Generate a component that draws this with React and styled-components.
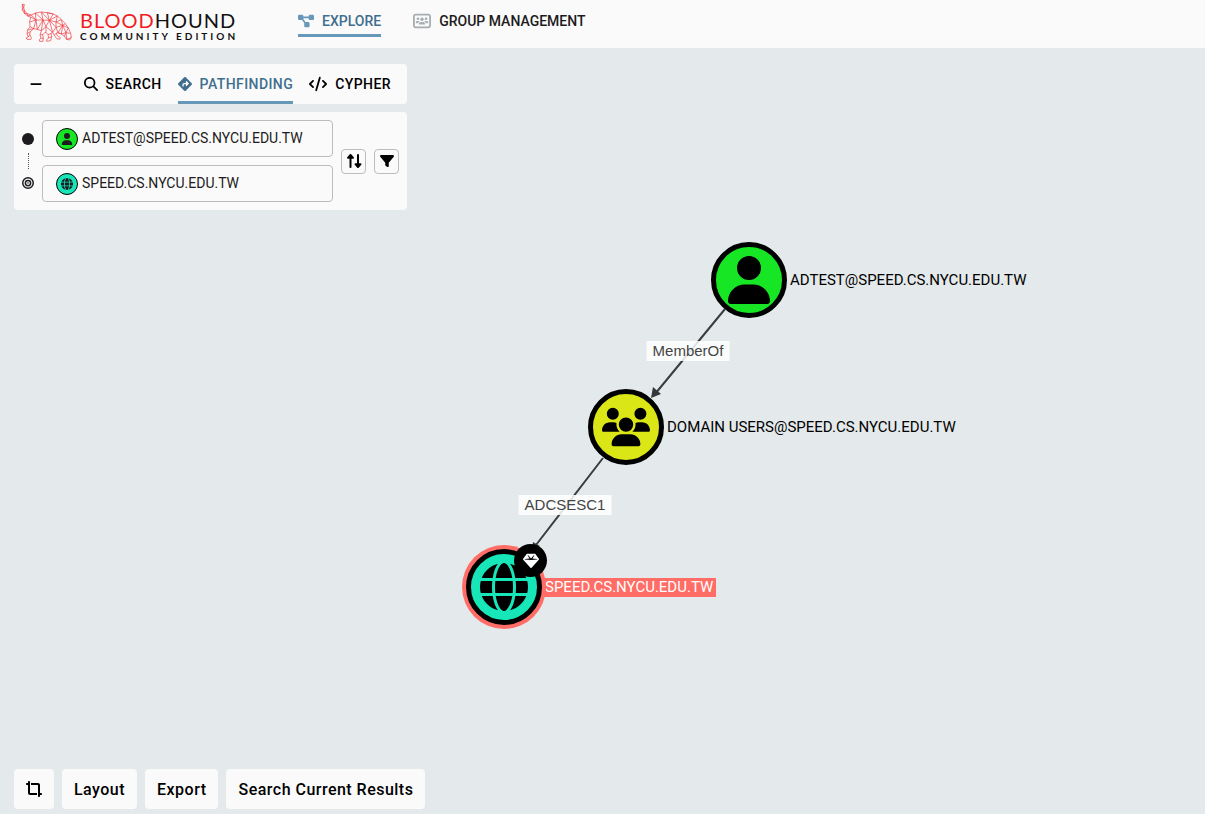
import React, { useState } from "react";
import styled, { createGlobalStyle, css } from "styled-components";
import {
  FaDiagramProject,
  FaUsersRectangle,
  FaMinus,
  FaMagnifyingGlass,
  FaDiamondTurnRight,
  FaCode,
  FaUser,
  FaUsers,
  FaGlobe,
  FaGem,
  FaFilter,
  FaCircle,
  FaBullseye,
  FaCropSimple,
} from "react-icons/fa6";

const GlobalStyle = createGlobalStyle`
  *, *::before, *::after { box-sizing: border-box; }
  body {
    margin: 0;
    background: #e4e9eb;
    color: #000;
    font-family: Roboto, "Liberation Sans", sans-serif;
  }
  button, input { font: inherit; color: inherit; }
  button { cursor: pointer; }
  svg { display: block; flex: none; }
`;

const Page = styled.div`
  display: flex;
  flex-direction: column;
  min-height: 100vh;
`;

const Header = styled.header`
  display: flex;
  align-items: flex-start;
  height: 48px;
  padding-left: 20px;
  background: #fafafa;
`;

const Brand = styled.a`
  display: flex;
  align-items: flex-start;
  width: 278px;
  color: #111;
  text-decoration: none;
  font-family: Lato, sans-serif;
`;

const BrandText = styled.span`
  display: flex;
  flex-direction: column;
  padding: 8px 0 0 8px;
`;

const BrandName = styled.span`
  font-size: 20px;
  line-height: 24px;
  letter-spacing: 1px;
`;

const BrandRed = styled.span`
  color: #f01c24;
`;

const BrandEdition = styled.span`
  font-size: 10px;
  line-height: 8px;
  font-weight: 700;
  letter-spacing: 3px;
`;

const Nav = styled.nav`
  display: flex;
  gap: 32px;
  padding-top: 5px;
`;

const NavLink = styled.a`
  display: flex;
  align-items: center;
  gap: 8px;
  height: 32px;
  padding-top: 2px;
  border-bottom: 3px solid ${(p) => (p.$active ? "#6798b9" : "transparent")};
  color: ${(p) => (p.$active ? "#406f8e" : "#1d1b20")};
  font-size: 14px;
  font-weight: 500;
  text-decoration: none;

  svg {
    color: ${(p) => (p.$active ? "#6798b9" : "#a7adb0")};
  }
`;

const Main = styled.main`
  position: relative;
  display: flex;
  flex: 1;
  flex-direction: column;
  justify-content: space-between;
  align-items: flex-start;
  gap: 24px;
  padding: 16px 14px 5px;
`;

const SearchPanel = styled.section`
  z-index: 1;
  display: flex;
  flex-direction: column;
  gap: 8px;
  width: 393px;
`;

const card = css`
  border-radius: 4px;
  background: #fafafa;
`;

const TabBar = styled.div`
  ${card}
  display: flex;
  align-items: stretch;
  height: 40px;
  padding-right: 16px;
`;

const CollapseButton = styled.button`
  display: flex;
  align-items: center;
  justify-content: center;
  width: 44px;
  margin-right: auto;
  padding: 0;
  border: 0;
  background: none;
`;

const Tabs = styled.div`
  display: flex;
  gap: 16px;
`;

const Tab = styled.button`
  display: flex;
  align-items: center;
  gap: 8px;
  padding: 3px 0 0;
  border: 0;
  border-bottom: 3px solid ${(p) => (p.$active ? "#6798b9" : "transparent")};
  background: none;
  color: ${(p) => (p.$active ? "#406f8e" : "#000")};
  font-size: 14px;
  font-weight: 500;
  letter-spacing: 0.03em;
`;

const PathForm = styled.form`
  ${card}
  display: flex;
  align-items: center;
  gap: 8px;
  padding: 8px;
`;

const PathMarks = styled.div`
  display: flex;
  flex-direction: column;
  align-items: center;
  gap: 8px;
  width: 12px;
  color: #1d1b20;
`;

const DottedLine = styled.span`
  height: 16px;
  border-left: 1px dotted #555;
`;

const Fields = styled.div`
  display: flex;
  flex: 1;
  flex-direction: column;
  gap: 8px;
`;

const Field = styled.label`
  display: flex;
  align-items: center;
  gap: 4px;
  height: 37px;
  padding: 0 13px;
  border: 1px solid #bcbcbc;
  border-radius: 4px;
`;

const FieldIcon = styled.span`
  display: flex;
  align-items: center;
  justify-content: center;
  width: 22px;
  height: 22px;
  border: 1px solid #000;
  border-radius: 50%;
  background: ${(p) => p.$color};
  color: #1d1b20;
`;

const FieldInput = styled.input`
  flex: 1;
  min-width: 0;
  padding: 0 0 2px;
  border: 0;
  outline: 0;
  background: none;
  color: #1d1b20;
  font-size: 14px;
  line-height: 20px;
`;

const SquareButton = styled.button`
  display: flex;
  align-items: center;
  justify-content: center;
  width: 25px;
  height: 25px;
  padding: 0;
  border: 1px solid #bcbcbc;
  border-radius: 4px;
  background: #fafafa;
`;

const SwapIcon = () => (
  <svg width="16" height="16" viewBox="0 0 16 16" fill="none" stroke="currentColor" strokeWidth="2" strokeLinecap="round" strokeLinejoin="round" aria-hidden="true">
    <path d="M4.5 14V3M12 2v11" />
    <path d="M2 4.8L4.5 2 7 4.8zM9.5 11.2L12 14l2.5-2.8z" fill="currentColor" />
  </svg>
);

const Toolbar = styled.div`
  z-index: 1;
  display: flex;
  gap: 8px;
`;

const ToolButton = styled.button`
  ${card}
  display: flex;
  align-items: center;
  height: 40px;
  padding: 0 12px;
  border: 0;
  font-size: 16px;
  font-weight: 500;
  letter-spacing: 0.03em;
`;

const Canvas = styled.div`
  position: absolute;
  inset: 0;
  display: flex;
  align-items: center;
  justify-content: center;
  overflow: hidden;
`;

const Graph = styled.div`
  position: relative;
  flex: none;
  width: 905px;
  height: 400px;
`;

const Edges = styled.svg`
  position: absolute;
  inset: 0;
`;

const EdgeLabel = styled.span`
  position: absolute;
  left: ${(p) => p.$x}px;
  top: ${(p) => p.$y}px;
  padding: 0 6px;
  transform: translate(-50%, -50%);
  background: rgba(255, 255, 255, 0.85);
  color: #444;
  font-family: "Liberation Sans", sans-serif;
  font-size: 15px;
  line-height: 20px;
`;

const Node = styled.div`
  position: absolute;
  left: ${(p) => p.$x - 38}px;
  top: ${(p) => p.$y - 38}px;
  display: flex;
  align-items: center;
`;

const Disc = styled.span`
  position: relative;
  z-index: 1;
  display: flex;
  align-items: center;
  justify-content: center;
  width: 76px;
  height: 76px;
  border: 5px solid #000;
  border-radius: 50%;
  background: ${(p) => p.$color};
  box-shadow: ${(p) => (p.$selected ? "0 0 0 4px #ff6d66" : "none")};
`;

const Badge = styled.span`
  position: absolute;
  top: -10px;
  right: -10px;
  display: flex;
  align-items: center;
  justify-content: center;
  width: 33px;
  height: 33px;
  border-radius: 50%;
  background: #000;
  color: #fff;
`;

const NodeLabel = styled.span`
  padding: 0 3px;
  background: ${(p) => (p.$selected ? "#ff6d66" : "none")};
  color: ${(p) => (p.$selected ? "#fff" : "#000")};
  font-size: 15px;
  line-height: 19px;
  white-space: nowrap;
`;

const HoundMark = () => (
  <svg width="52" height="46" viewBox="6 0 156 138" fill="none" stroke="#f0373c" strokeWidth="2" strokeLinejoin="round" aria-hidden="true">
    <path d="M13 13L19 13L17 23L20 33L28 41L40 45L52 39L70 36L88 38L106 42L118 48L130 59L142 71L151 84L158 100L160 113L155 120L146 118L139 109L130 102L120 98L114 100L119 108L127 113L125 118L116 116L109 106L104 97L99 100L101 110L98 122L86 124L86 119L92 114L90 104L84 97L80 98L74 104L76 115L75 124L65 124L64 119L69 115L66 104L70 92L58 88L47 86L37 95L35 103L40 113L38 119L27 118L24 114L31 111L27 101L29 90L36 80L35 66L38 51L29 48L19 40L13 29Z" />
    <path d="M13 13L17 23L13 29L20 33L19 40L28 41L29 48L40 45L54 60L52 39L75 60L70 36L94 61L88 38L106 42L94 61L118 48L114 66L130 59L134 76L142 71" />
    <path d="M38 51L54 60L75 60L94 61L114 66L134 76L151 84M35 66L54 60L47 86L36 80M54 60L58 88L75 60L70 92L84 80L75 60M84 80L94 61L104 97L84 80L84 97M94 61L114 82L114 66M104 97L114 82L134 76L120 98L114 82M134 76L130 102L120 98M134 76L144 98L151 84M130 102L144 98L158 100M139 109L144 98L146 118L160 113M29 90L47 86M27 101L37 95M31 111L35 103M66 104L74 104M69 115L76 115M90 104L99 100M92 114L101 110M109 106L114 100" />
  </svg>
);

const nodes = [
  { label: "ADTEST@SPEED.CS.NYCU.EDU.TW", x: 599, y: 49, color: "#17e625", Icon: FaUser },
  { label: "DOMAIN USERS@SPEED.CS.NYCU.EDU.TW", x: 476, y: 196, color: "#dbe617", Icon: FaUsers },
  { label: "SPEED.CS.NYCU.EDU.TW", x: 354, y: 356, color: "#17e6b9", Icon: FaGlobe, selected: true },
];

const edges = [
  { label: "MemberOf", x: 538, y: 120 },
  { label: "ADCSESC1", x: 415, y: 274 },
];

const tabs = [
  { label: "SEARCH", Icon: FaMagnifyingGlass, size: 14 },
  { label: "PATHFINDING", Icon: FaDiamondTurnRight, size: 14 },
  { label: "CYPHER", Icon: FaCode, size: 18 },
];

export default function App() {
  const [tab, setTab] = useState("PATHFINDING");
  const [start, setStart] = useState("ADTEST@SPEED.CS.NYCU.EDU.TW");
  const [end, setEnd] = useState("SPEED.CS.NYCU.EDU.TW");
  const swap = () => {
    setStart(end);
    setEnd(start);
  };

  return (
    <Page>
      <GlobalStyle />
      <Header>
        <Brand href="#">
          <HoundMark />
          <BrandText>
            <BrandName><BrandRed>BLOOD</BrandRed>HOUND</BrandName>
            <BrandEdition>COMMUNITY EDITION</BrandEdition>
          </BrandText>
        </Brand>
        <Nav>
          <NavLink href="#explore" $active>
            <FaDiagramProject size={16} />
            EXPLORE
          </NavLink>
          <NavLink href="#groups">
            <FaUsersRectangle size={18} />
            GROUP MANAGEMENT
          </NavLink>
        </Nav>
      </Header>
      <Main>
        <Canvas>
          <Graph>
            <Edges width="905" height="400" aria-hidden="true">
              <path d="M575 78L505 163M453 227L386 314" stroke="#3a3d3f" strokeWidth="2" />
              <g fill="#33383a">
                <path d="M501 167L503 156L511 163Z" />
                <path d="M382 320L383 311L390 315Z" />
              </g>
            </Edges>
            {edges.map((e) => (
              <EdgeLabel key={e.label} $x={e.x} $y={e.y}>{e.label}</EdgeLabel>
            ))}
            {nodes.map(({ label, x, y, color, Icon, selected }) => (
              <Node key={label} $x={x} $y={y}>
                <Disc $color={color} $selected={selected}>
                  <Icon size={48} />
                  {selected && <Badge><FaGem size={16} /></Badge>}
                </Disc>
                <NodeLabel $selected={selected}>{label}</NodeLabel>
              </Node>
            ))}
          </Graph>
        </Canvas>
        <SearchPanel>
          <TabBar>
            <CollapseButton type="button" aria-label="Collapse"><FaMinus size={14} /></CollapseButton>
            <Tabs role="tablist">
              {tabs.map(({ label, Icon, size }) => (
                <Tab key={label} type="button" role="tab" aria-selected={tab === label} $active={tab === label} onClick={() => setTab(label)}>
                  <Icon size={size} />
                  {label}
                </Tab>
              ))}
            </Tabs>
          </TabBar>
          <PathForm onSubmit={(e) => e.preventDefault()}>
            <PathMarks>
              <FaCircle size={12} />
              <DottedLine />
              <FaBullseye size={12} />
            </PathMarks>
            <Fields>
              <Field>
                <FieldIcon $color="#17e625"><FaUser size={12} /></FieldIcon>
                <FieldInput aria-label="Start node" value={start} onChange={(e) => setStart(e.target.value)} />
              </Field>
              <Field>
                <FieldIcon $color="#17e6b9"><FaGlobe size={12} /></FieldIcon>
                <FieldInput aria-label="Destination node" value={end} onChange={(e) => setEnd(e.target.value)} />
              </Field>
            </Fields>
            <SquareButton type="button" aria-label="Swap" onClick={swap}><SwapIcon /></SquareButton>
            <SquareButton type="button" aria-label="Filter"><FaFilter size={14} /></SquareButton>
          </PathForm>
        </SearchPanel>
        <Toolbar>
          <ToolButton type="button" aria-label="Fit to view"><FaCropSimple size={16} /></ToolButton>
          <ToolButton type="button">Layout</ToolButton>
          <ToolButton type="button">Export</ToolButton>
          <ToolButton type="button">Search Current Results</ToolButton>
        </Toolbar>
      </Main>
    </Page>
  );
}
